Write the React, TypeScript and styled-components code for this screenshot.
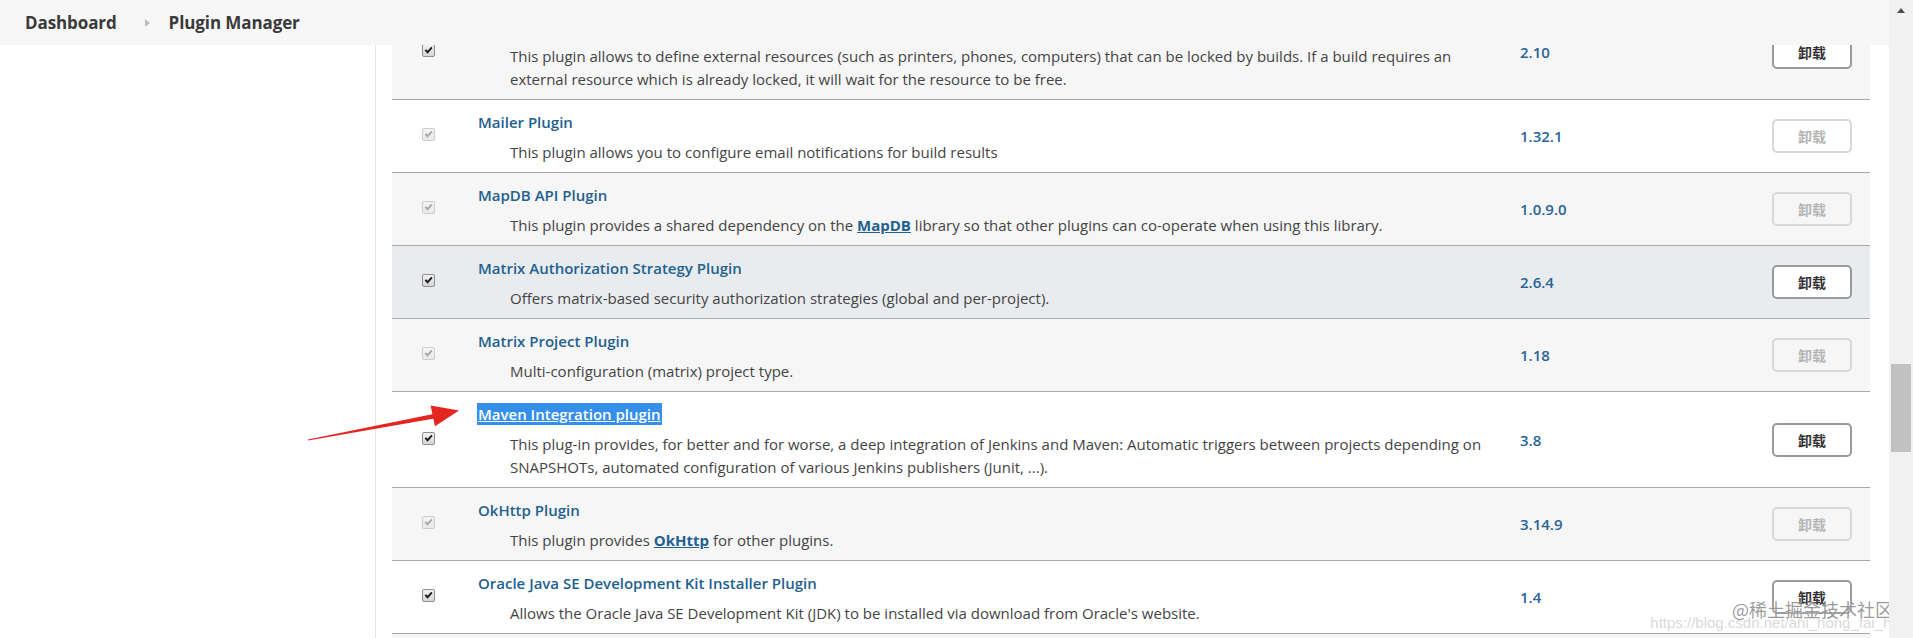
import React from "react";
import styled, { createGlobalStyle, css } from "styled-components";

const GlobalStyle = createGlobalStyle`
  html, body {
    margin: 0;
    padding: 0;
    background: #fff;
    overflow: hidden;
  }
  body {
    font-family: "Open Sans", "Noto Sans CJK SC", sans-serif;
    color: #333;
  }
  * { box-sizing: border-box; }
`;

const Frame = styled.div`
  display: flex;
  width: 100%;
  height: 638px;
`;

const Viewport = styled.div`
  position: relative;
  flex: 1;
  min-width: 0;
  overflow: hidden;
`;

const TopBar = styled.header`
  position: absolute;
  top: 0;
  left: 0;
  right: 0;
  z-index: 3;
  height: 45px;
  display: flex;
  align-items: center;
  padding-left: 25px;
  background: #f7f7f7;
`;

const Crumb = styled.span`
  font-size: 17px;
  font-weight: 700;
  color: #3a3a3a;
  letter-spacing: -0.1px;
`;

const CrumbSep = styled.span`
  width: 0;
  height: 0;
  border-top: 4.5px solid transparent;
  border-bottom: 4.5px solid transparent;
  border-left: 5px solid #bdbdbd;
  margin: 1px 19px 0 28px;
`;

const PageBody = styled.div`
  display: flex;
  height: 100%;
  padding-top: 4px;
`;

const SidePanel = styled.aside`
  width: 376px;
  flex: none;
  border-right: 1px solid #e6e6e6;
  background: #fff;
`;

const Content = styled.main`
  flex: 1;
  min-width: 0;
  padding: 0 19px 0 16px;
`;

type Tone = "plain" | "alt" | "hover";

const toneBg: Record<Tone, string> = {
  plain: "#ffffff",
  alt: "#f6f6f6",
  hover: "#e9ecef",
};

const PluginRow = styled.div<{ $tone: Tone }>`
  display: grid;
  grid-template-columns: 72px 1036px 258px 112px;
  align-items: center;
  border-bottom: 1px solid #a9a9a9;
  background: ${(p) => toneBg[p.$tone]};
`;

const CheckCell = styled.div`
  display: flex;
  justify-content: center;
  margin-bottom: 3px;
`;

const CheckBox = styled.span<{ $disabled?: boolean }>`
  display: inline-flex;
  align-items: center;
  justify-content: center;
  width: 13px;
  height: 13px;
  border-radius: 2px;
  ${(p) =>
    p.$disabled
      ? css`
          border: 1px solid #cdcdcd;
          background: linear-gradient(#f4f4f4, #e9e9e9);
          color: #a8a8a8;
        `
      : css`
          border: 1px solid #8e8e8e;
          background: linear-gradient(#f2f2f2, #d6d6d6);
          color: #1e1e1e;
        `}
`;

const NameCell = styled.div`
  align-self: stretch;
  padding: 11px 10px 8px 14px;
`;

const PluginTitle = styled.a<{ $selected?: boolean }>`
  display: inline-block;
  font-size: 15px;
  font-weight: 600;
  line-height: 22px;
  color: #22608f;
  text-decoration: none;
  ${(p) =>
    p.$selected &&
    css`
      background: #338fea;
      color: #fff;
      text-decoration: underline;
      padding: 0 1px;
      margin-left: -1px;
    `}
`;

const Description = styled.div`
  margin-top: 8px;
  padding-left: 32px;
  font-size: 15px;
  line-height: 23px;
  color: #444;
`;

const InlineLink = styled.a`
  color: #22608f;
  font-weight: 700;
  text-decoration: underline;
`;

const VersionCell = styled.div`
  padding-left: 20px;
  font-size: 15px;
  font-weight: 600;
  color: #2a6496;
`;

const ActionCell = styled.div`
  display: flex;
  justify-content: flex-end;
  padding-right: 18px;
`;

const UninstallButton = styled.button`
  width: 80px;
  height: 34px;
  border-radius: 5px;
  border: 2px solid #9b9b9b;
  background: #fff;
  color: #333;
  font-family: "Noto Sans CJK SC", sans-serif;
  font-size: 14px;
  font-weight: 700;
  padding: 0;

  &:disabled {
    border-color: #d8d8d8;
    background: transparent;
    color: #b5b5b5;
  }
`;

const ScrollTrack = styled.div`
  width: 24px;
  flex: none;
  display: flex;
  flex-direction: column;
  align-items: center;
  background: #f1f1f1;
`;

const ScrollArrow = styled.span`
  width: 0;
  height: 0;
  margin-top: 8px;
  border-left: 4px solid transparent;
  border-right: 4px solid transparent;
  border-bottom: 5px solid #505050;
`;

const ScrollThumb = styled.span`
  width: 20px;
  height: 88px;
  margin-top: 351px;
  background: #c1c1c1;
`;

const Annotation = styled.svg`
  position: absolute;
  left: 0;
  top: 0;
  z-index: 4;
  pointer-events: none;
`;

const Watermark = styled.div`
  position: absolute;
  right: 0;
  bottom: 8px;
  z-index: 5;
  display: flex;
  flex-direction: column;
  align-items: flex-end;
  pointer-events: none;
`;

const MarkTitle = styled.span`
  font-family: "Noto Sans CJK SC", sans-serif;
  font-size: 18px;
  line-height: 20px;
  color: rgba(120, 120, 120, 0.75);
  margin-right: -4px;
  text-shadow: 0 0 2px rgba(255, 255, 255, 0.8);
`;

const MarkUrl = styled.span`
  font-family: "Liberation Sans", sans-serif;
  font-size: 15px;
  line-height: 14px;
  margin-top: -3px;
  margin-right: -14px;
  color: rgba(190, 190, 190, 0.6);
`;

type DescPart = string | { link: string };

type Plugin = {
  name: string;
  desc: DescPart[];
  version: string;
  locked: boolean;
  removable: boolean;
  tone?: Tone;
  selected?: boolean;
};

const plugins: Plugin[] = [
  {
    name: "Lockable Resources plugin",
    desc: [
      "This plugin allows to define external resources (such as printers, phones, computers) that can be locked by builds. If a build requires an external resource which is already locked, it will wait for the resource to be free.",
    ],
    version: "2.10",
    locked: false,
    removable: true,
  },
  {
    name: "Mailer Plugin",
    desc: ["This plugin allows you to configure email notifications for build results"],
    version: "1.32.1",
    locked: true,
    removable: false,
  },
  {
    name: "MapDB API Plugin",
    desc: [
      "This plugin provides a shared dependency on the ",
      { link: "MapDB" },
      " library so that other plugins can co-operate when using this library.",
    ],
    version: "1.0.9.0",
    locked: true,
    removable: false,
  },
  {
    name: "Matrix Authorization Strategy Plugin",
    desc: ["Offers matrix-based security authorization strategies (global and per-project)."],
    version: "2.6.4",
    locked: false,
    removable: true,
    tone: "hover",
  },
  {
    name: "Matrix Project Plugin",
    desc: ["Multi-configuration (matrix) project type."],
    version: "1.18",
    locked: true,
    removable: false,
  },
  {
    name: "Maven Integration plugin",
    desc: [
      "This plug-in provides, for better and for worse, a deep integration of Jenkins and Maven: Automatic triggers between projects depending on SNAPSHOTs, automated configuration of various Jenkins publishers (Junit, ...).",
    ],
    version: "3.8",
    locked: false,
    removable: true,
    selected: true,
  },
  {
    name: "OkHttp Plugin",
    desc: ["This plugin provides ", { link: "OkHttp" }, " for other plugins."],
    version: "3.14.9",
    locked: true,
    removable: false,
  },
  {
    name: "Oracle Java SE Development Kit Installer Plugin",
    desc: ["Allows the Oracle Java SE Development Kit (JDK) to be installed via download from Oracle's website."],
    version: "1.4",
    locked: false,
    removable: true,
  },
  {
    name: "PAM Authentication plugin",
    desc: ["Adds Unix Pluggable Authentication Module (PAM) support to Jenkins."],
    version: "1.6",
    locked: true,
    removable: false,
  },
];

const Tick = () => (
  <svg width="9" height="9" viewBox="0 0 9 9" aria-hidden="true">
    <path d="M0.6 4.6 L2.2 3.2 L3.6 4.7 L7.2 0.8 L8.6 2 L3.6 7.8 Z" fill="currentColor" />
  </svg>
);

const PluginLine = ({ plugin, index }: { plugin: Plugin; index: number }) => {
  const tone: Tone = plugin.tone ?? (index % 2 === 0 ? "alt" : "plain");
  return (
    <PluginRow $tone={tone}>
      <CheckCell>
        <CheckBox $disabled={plugin.locked} role="checkbox" aria-checked="true">
          <Tick />
        </CheckBox>
      </CheckCell>
      <NameCell>
        <PluginTitle href="#" $selected={plugin.selected}>
          {plugin.name}
        </PluginTitle>
        <Description>
          {plugin.desc.map((part, i) =>
            typeof part === "string" ? (
              <React.Fragment key={i}>{part}</React.Fragment>
            ) : (
              <InlineLink key={i} href="#">
                {part.link}
              </InlineLink>
            )
          )}
        </Description>
      </NameCell>
      <VersionCell>{plugin.version}</VersionCell>
      <ActionCell>
        <UninstallButton disabled={!plugin.removable}>卸载</UninstallButton>
      </ActionCell>
    </PluginRow>
  );
};

// Hand-drawn red pointer: a tapering shaft ending in a triangular head.
const Pointer = () => (
  <Annotation width="600" height="500" viewBox="0 0 600 500">
    <polygon points="308,439.5 308.2,440.6 434.4,418.6 433.4,414" fill="#e3261f" />
    <polygon points="459,410.5 430.6,405.6 435,426.2" fill="#e3261f" />
  </Annotation>
);

export default function App() {
  return (
    <>
      <GlobalStyle />
      <Frame>
        <Viewport>
          <TopBar>
            <Crumb>Dashboard</Crumb>
            <CrumbSep />
            <Crumb>Plugin Manager</Crumb>
          </TopBar>
          <PageBody>
            <SidePanel />
            <Content>
              {plugins.map((p, i) => (
                <PluginLine key={p.name} plugin={p} index={i} />
              ))}
            </Content>
          </PageBody>
          <Pointer />
          <Watermark>
            <MarkTitle>@稀土掘金技术社区</MarkTitle>
            <MarkUrl>https://blog.csdn.net/ahi_hong_fai_hei</MarkUrl>
          </Watermark>
        </Viewport>
        <ScrollTrack>
          <ScrollArrow />
          <ScrollThumb />
        </ScrollTrack>
      </Frame>
    </>
  );
}
